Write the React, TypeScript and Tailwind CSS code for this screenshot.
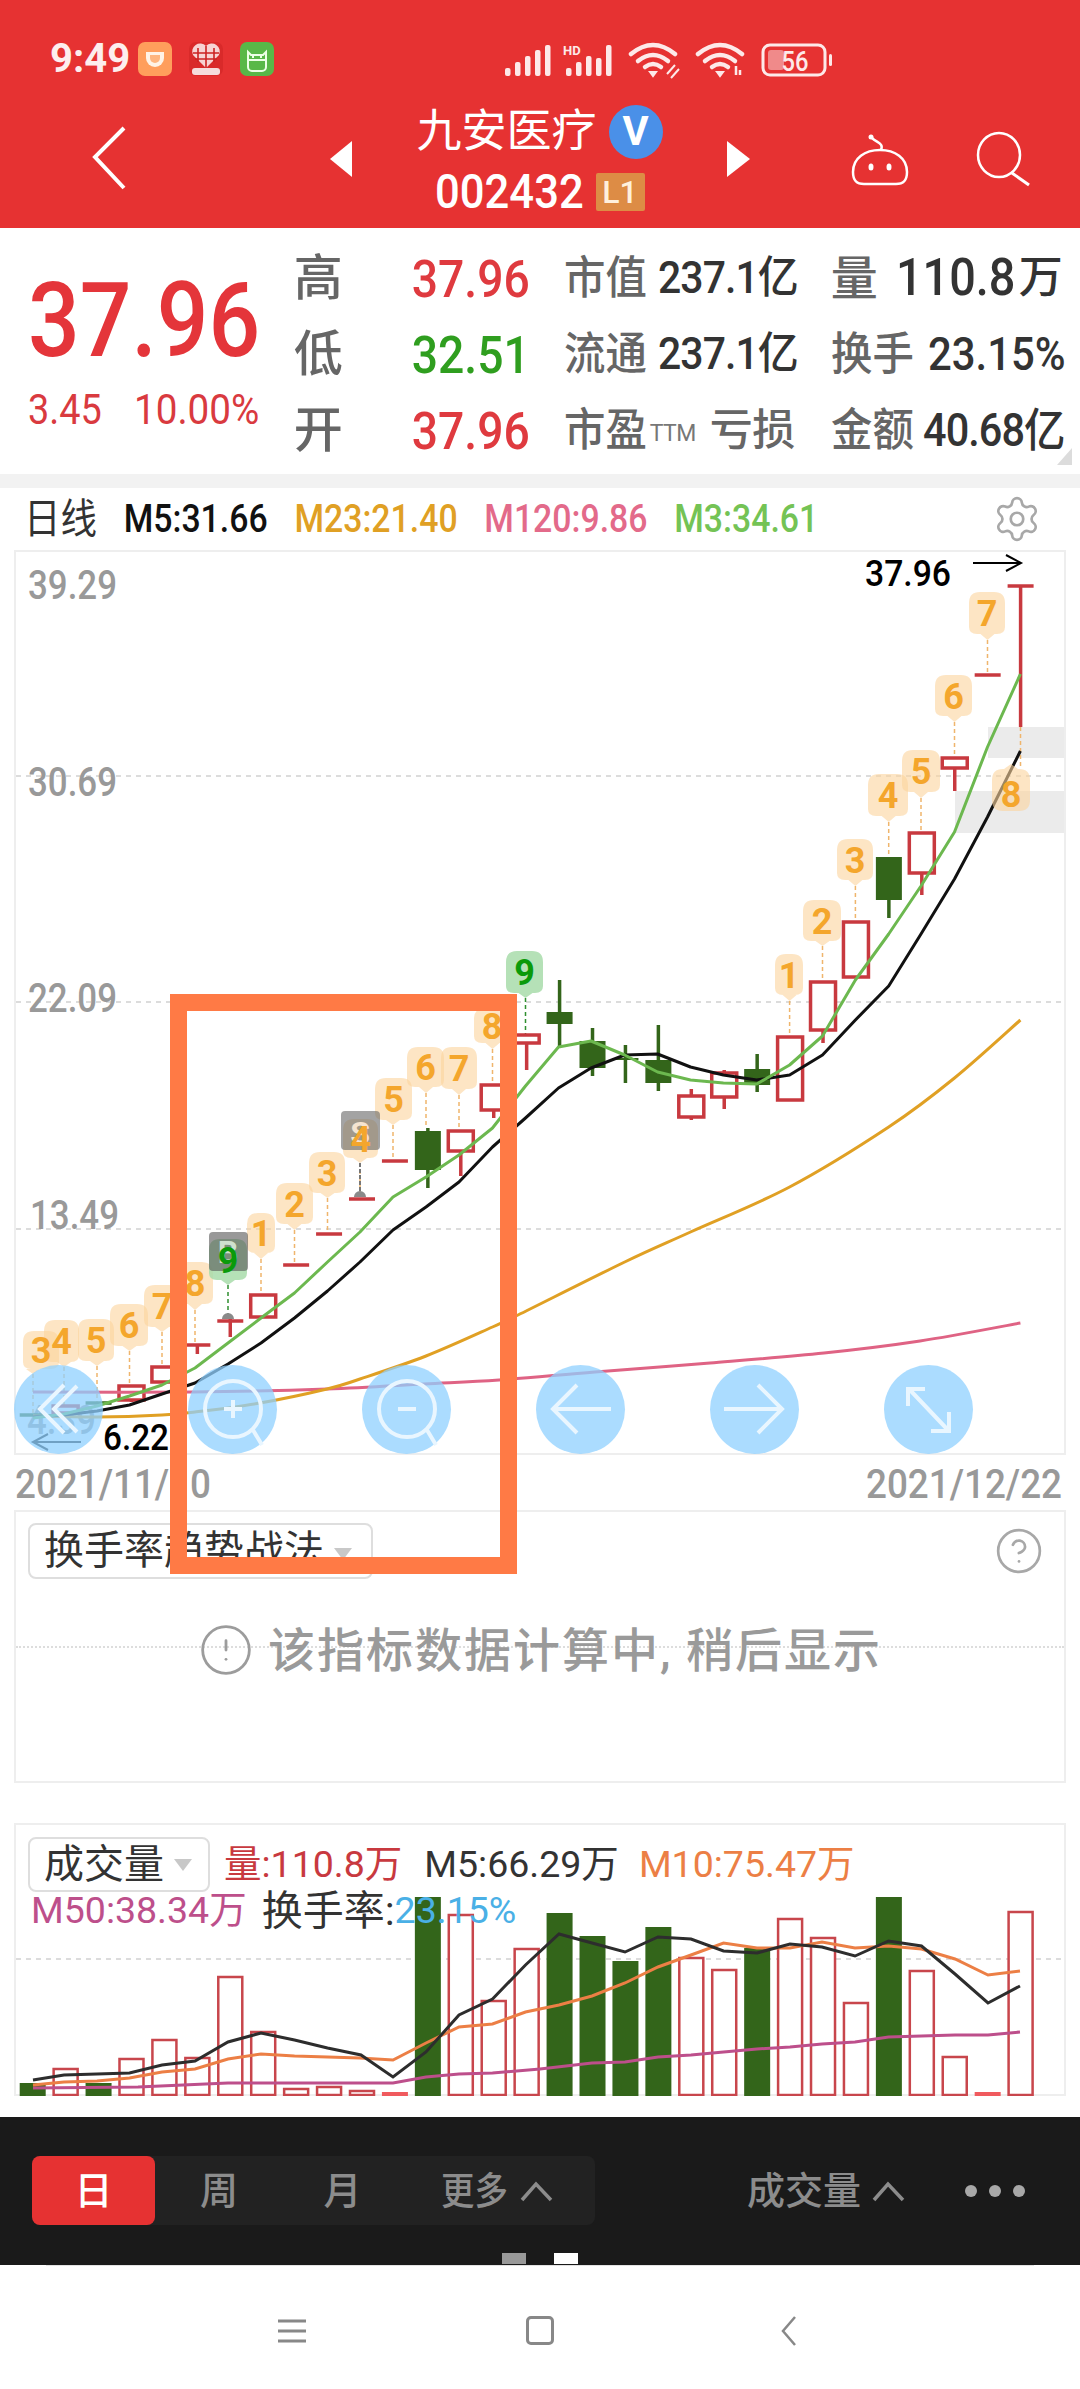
import React from "react";
import { Settings, CircleHelp, CircleAlert } from "lucide-react";

const X = (i: number) => 32.7 + 32.93 * i;
type C = [number, "h" | "g" | "d" | "e", number, number, number?, number?];
const RED = "#c8393f";
const GRN = "#33651a";
const candles: C[] = [
  [0, "e", 1415, 1415],
  [1, "h", 1406, 1413],
  [2, "e", 1403, 1403],
  [3, "h", 1386, 1400, 1386, 1402],
  [4, "h", 1367, 1382],
  [5, "d", 1345, 1345, 1345, 1354],
  [6, "d", 1321, 1321, 1316, 1337],
  [7, "h", 1295, 1317],
  [8, "d", 1265, 1265],
  [9, "d", 1234, 1234],
  [10, "d", 1199, 1199],
  [11, "d", 1161, 1161],
  [12, "g", 1131, 1170, 1128, 1188],
  [13, "h", 1131, 1151, 1131, 1176],
  [14, "h", 1085, 1110, 1085, 1118],
  [15, "h", 1035, 1043, 1035, 1070],
  [16, "g", 1012, 1024, 980, 1047],
  [17, "g", 1041, 1068, 1028, 1076],
  [18, "g", 1058, 1060, 1045, 1083],
  [19, "g", 1060, 1083, 1025, 1091],
  [20, "h", 1096, 1117, 1089, 1120],
  [21, "h", 1073, 1097, 1070, 1109],
  [22, "g", 1069, 1085, 1054, 1092],
  [23, "h", 1037, 1100],
  [24, "h", 982, 1030, 982, 1043],
  [25, "h", 922, 977],
  [26, "g", 857, 900, 857, 918],
  [27, "h", 833, 873, 833, 895],
  [28, "h", 758, 768, 758, 791],
  [29, "d", 675, 675],
  [30, "d", 586, 586, 586, 727],
];
type B = [string, number, number, number, number, number, number, number];
const badges: B[] = [
  ["3", 23, 59, 1331, 1369, 33, 1374, 1415],
  ["4", 44, 79, 1320, 1362, 64, 1367, 1406],
  ["5", 78, 114, 1319, 1361, 97, 1366, 1403],
  ["6", 110, 148, 1304, 1346, 129.5, 1351, 1386],
  ["7", 144, 180, 1285, 1327, 162, 1332, 1367],
  ["8", 177, 213, 1262, 1304, 195, 1310, 1345],
  ["9", 209, 247, 1239, 1280, 228, 1285, 1316],
  ["1", 247, 275, 1213, 1253, 261, 1259, 1295],
  ["2", 276, 313, 1183, 1224, 294.5, 1230, 1265],
  ["3", 309, 345, 1152, 1193, 327.5, 1198, 1234],
  ["4", 343, 378, 1119, 1158, 360, 1163, 1199],
  ["5", 375, 412, 1078, 1120, 393, 1125, 1161],
  ["6", 407, 444, 1047, 1087, 426, 1093, 1128],
  ["7", 441, 477, 1047, 1089, 459, 1095, 1131],
  ["8", 474, 510, 1008, 1043, 492.5, 1049, 1085],
  ["9", 506, 543, 951, 993, 525.5, 998, 1035],
  ["1", 775, 803, 954, 995, 789.6, 1001, 1037],
  ["2", 803, 841, 900, 941, 822.5, 946, 982],
  ["3", 837, 873, 839, 880, 855.4, 886, 922],
  ["4", 868, 908, 774, 816, 888.7, 822, 857],
  ["5", 902, 940, 750, 792, 921, 798, 833],
  ["6", 935, 972, 675, 716, 954.5, 722, 758],
  ["7", 969, 1005, 592, 634, 987.5, 640, 675],
];
const pill = (b: B) => {
  const [, x0, x1, y0, y1, tx, ty] = b;
  const r = 11;
  return `M${x0 + r} ${y0}H${x1 - r}Q${x1} ${y0} ${x1} ${y0 + r}V${y1 - 7}Q${x1} ${y1} ${x1 - 8} ${y1}H${tx + 7}L${tx} ${ty}L${tx - 7} ${y1}H${x0 + 8}Q${x0} ${y1} ${x0} ${y1 - 7}V${y0 + r}Q${x0} ${y0} ${x0 + r} ${y0}Z`;
};
const P = (a: number[][]) => a.map((p) => p.join(",")).join(" ");
const smooth = (a: number[][]) => {
  let d = `M${a[0][0]} ${a[0][1]}`;
  for (let i = 0; i < a.length - 1; i++) {
    const p0 = a[Math.max(i - 1, 0)];
    const p1 = a[i];
    const p2 = a[i + 1];
    const p3 = a[Math.min(i + 2, a.length - 1)];
    d += `C${p1[0] + (p2[0] - p0[0]) / 6} ${p1[1] + (p2[1] - p0[1]) / 6} ${p2[0] - (p3[0] - p1[0]) / 6} ${p2[1] - (p3[1] - p1[1]) / 6} ${p2[0]} ${p2[1]}`;
  }
  return d;
};
const ma3 = [[33, 1418], [64, 1414], [97, 1406], [129.5, 1396], [162, 1385], [195, 1368], [228, 1343], [261, 1318], [294.5, 1293], [327.5, 1262], [360, 1232], [393, 1197], [426, 1177], [459, 1155], [492.5, 1128], [525.5, 1086], [558.5, 1047], [591, 1041], [624.7, 1055], [657.6, 1072], [690.5, 1080], [723.4, 1083], [756.7, 1084], [789.6, 1065], [822.5, 1036], [855.4, 980], [888.7, 934], [921, 886], [954.5, 832], [987.5, 747], [1020.4, 674]];
const ma5 = [[33, 1417], [64, 1415], [97, 1411], [129.5, 1405], [162, 1394], [195, 1383], [228, 1364], [261, 1343], [294.5, 1318], [327.5, 1291], [360, 1262], [393, 1230], [426, 1207], [459, 1182], [492.5, 1147], [525.5, 1118], [558.5, 1088], [591, 1068], [624.7, 1055], [657.6, 1054], [690.5, 1067], [723.4, 1075], [756.7, 1080], [789.6, 1075], [822.5, 1055], [855.4, 1020], [888.7, 986], [921, 934], [954.5, 879], [987.5, 817], [1020.4, 751]];
const ma23 = [[33, 1416], [97, 1417], [162, 1415], [195, 1412], [260, 1403], [327, 1389], [360, 1379], [426, 1356], [492.5, 1327], [518, 1315], [624.7, 1262], [690.5, 1232], [789.6, 1187], [888.7, 1127], [954.5, 1078], [1020.4, 1020]];
const ma120 = [[33, 1392], [193, 1392], [327, 1389], [424, 1384], [499, 1380], [595, 1372], [710, 1363], [824, 1353], [920, 1341], [1020.4, 1323]];

type V = [number, number];
const vols: V[] = [[2083, 0], [2069, 1], [2083, 0], [2059, 1], [2040, 1], [2058, 1], [1977, 1], [2032, 1], [2089, 1], [2087, 1], [2091, 1], [2092, 2], [1897, 0], [1915, 1], [2001, 1], [1949, 1], [1913, 0], [1936, 0], [1961, 0], [1927, 0], [1958, 1], [1970, 1], [1948, 0], [1919, 1], [1938, 1], [2003, 1], [1897, 0], [1971, 1], [2057, 1], [2092, 2], [1912, 1]];
const vBlack = [[33, 2080], [64, 2075], [97, 2074], [129.5, 2073], [162, 2065], [195, 2061], [228, 2042], [261, 2033], [294.5, 2040], [327.5, 2048], [361, 2055], [393, 2077], [426, 2052], [459, 2015], [492.5, 1999], [525.5, 1965], [559, 1934], [592, 1943], [625, 1952], [658, 1937], [691, 1939], [723.5, 1951], [757, 1953], [790, 1944], [822, 1947], [855, 1956], [888.5, 1941], [921.5, 1946], [955, 1974], [988, 2003], [1020, 1986]];
const vOrange = [[33, 2085], [64, 2082], [97, 2081], [129.5, 2078], [162, 2072], [195, 2069], [228, 2059], [261, 2054], [294.5, 2056], [327.5, 2057], [360, 2058], [393, 2060], [426, 2043], [459, 2027], [492.5, 2024], [525.5, 2012], [559, 2005], [592, 1996], [625, 1983], [658, 1967], [691, 1955], [723.5, 1943], [757, 1948], [790, 1948], [822, 1942], [855, 1948], [888.5, 1946], [921.5, 1949], [955, 1959], [988, 1975], [1020, 1971]];
const vPink = [[33, 2088], [138, 2087], [228, 2083], [393, 2083], [426, 2077], [459, 2074], [492.5, 2073], [540, 2069], [592, 2063], [625, 2062], [658, 2057], [691, 2055], [723.5, 2052], [757, 2049], [790, 2047], [822, 2044], [855, 2042], [888.5, 2037], [921.5, 2036], [955, 2035], [988, 2035], [1020, 2032]];

function StatusCluster() {
  const c = "#fde9e9";
  const bars = (x: number, hs: number[]) =>
    hs.map((h, i) => <rect key={i} x={x + i * 10} y={76 - h} width={5.5} height={h} rx={2} fill={c} />);
  const wifi = (cx: number) => (
    <g fill="none" stroke={c} strokeWidth={4.5} strokeLinecap="round">
      <path d={`M${cx - 22} 54Q${cx} 36 ${cx + 22} 54`} />
      <path d={`M${cx - 15} 61Q${cx} 49 ${cx + 15} 61`} />
      <path d={`M${cx - 8} 67Q${cx} 61 ${cx + 8} 67`} />
      <path d={`M${cx - 3} 72L${cx} 76L${cx + 3} 72Z`} fill={c} strokeWidth={2} />
    </g>
  );
  return (
    <svg width={332} height={40} viewBox="503 41 332 40" className="block">
      {bars(505, [8, 14, 20, 26, 31])}
      {bars(566, [8, 14, 20, 18, 31])}
      <text x={563} y={55} fontSize={13} fontWeight={700} fill={c}>HD</text>
      {wifi(653)}
      <g fill="none" stroke={c} strokeWidth={2}>
        <path d="M667 74l8-9M671 78l8-9" />
      </g>
      {wifi(720)}
      <path d="M736 66v9M740 70v5" stroke={c} strokeWidth={2.5} />
      <rect x={763} y={45} width={62} height={30} rx={7} fill="none" stroke={c} strokeWidth={3} />
      <rect x={768} y={50} width={16} height={20} rx={3} fill="#f08a8a" />
      <rect x={829} y={54} width={3} height={12} rx={1.5} fill={c} />
      <text x={795} y={71} textAnchor="middle" fontSize={27} fontWeight={500} fill={c} textLength={27} lengthAdjust="spacingAndGlyphs">56</text>
    </svg>
  );
}

function AppIcons() {
  return (
    <svg width={136} height={36} viewBox="138 41 136 36" className="block">
      <rect x={138} y={42} width={34} height={34} rx={7} fill="#ff9e5c" />
      <path d="M146 52h18v6a9 9 0 0 1-18 0z" fill="#fff3e6" />
      <path d="M150 55h10v3a5 5 0 0 1-10 0z" fill="#ffb57e" />
      <rect x={189} y={42} width={34} height={34} rx={7} fill="#d92a2a" />
      <path d="M206 68l-13-13a8 8 0 0 1 13-9 8 8 0 0 1 13 9z" fill="#f7d3d3" />
      <path d="M198 48v14M206 46v22M214 48v14M193 53h26M195 59h22" stroke="#c22" strokeWidth={1.6} />
      <rect x={192} y={68} width={28} height={7} rx={3} fill="#f5dcdc" />
      <rect x={240} y={42} width={34} height={34} rx={7} fill="#59b848" />
      <path d="M248 52l3 3h12l3-3v15a4 4 0 0 1-4 4h-10a4 4 0 0 1-4-4z" fill="none" stroke="#ecffe6" strokeWidth={2} />
      <path d="M248 60h18M253 56v2M261 56v2" stroke="#ecffe6" strokeWidth={2} />
    </svg>
  );
}

function CandleChart() {
  return (
    <svg width={1048} height={901} viewBox="16 552 1048 901" className="block">
      {[776, 1002, 1229].map((y) => (
        <line key={y} x1={16} x2={1064} y1={y} y2={y} stroke="#dcdcdc" strokeWidth={2} strokeDasharray="5 5" />
      ))}
      <rect x={988} y={727} width={76} height={31} fill="#ebebeb" />
      <rect x={955} y={791} width={109} height={42} fill="#ebebeb" />
      {[["39.29", 28, 599], ["30.69", 28, 796], ["22.09", 28, 1012], ["13.49", 30, 1229]].map(([t, x, y]) => (
        <text key={t as string} x={x as number} y={y as number} fontSize={40} fontWeight={500} fill="#999" textLength={89} lengthAdjust="spacingAndGlyphs">{t}</text>
      ))}
      <text x={27} y={1434} fontSize={40} fontWeight={500} fill="#999" textLength={69} lengthAdjust="spacingAndGlyphs">4.39</text>
      {badges.map((b, i) => (
        <line key={i} x1={b[5]} x2={b[5]} y1={b[6]} y2={b[7]} stroke={b[0] === "9" ? "#2f8f2f" : "#efb56c"} strokeWidth={1.5} strokeDasharray="4 3" />
      ))}
      <line x1={1020.5} x2={1020.5} y1={727} y2={766} stroke="#efb56c" strokeWidth={1.5} strokeDasharray="4 3" />
      <line x1={360} x2={360} y1={1163} y2={1197} stroke="#777" strokeWidth={2} strokeDasharray="4 2" />
      {candles.map(([i, t, bt, bb, wt, wb]) => {
        const cx = X(i);
        const col = t === "g" || t === "e" ? GRN : RED;
        return (
          <g key={i}>
            {wt !== undefined && <line x1={cx} x2={cx} y1={wt} y2={wb} stroke={col} strokeWidth={3.5} />}
            {t === "h" && <rect x={cx - 12.5} y={bt} width={25} height={bb - bt} fill="#fff" stroke={col} strokeWidth={3.5} />}
            {t === "g" && <rect x={cx - 13} y={bt} width={26} height={bb - bt} fill={col} />}
            {(t === "d" || t === "e") && <line x1={cx - 13} x2={cx + 13} y1={bt} y2={bt} stroke={col} strokeWidth={3.5} />}
          </g>
        );
      })}
      <path d="M222 1319a6 6 0 0 1 12 0zM354 1197a6 6 0 0 1 12 0z" fill="#8a8a8a" />
      <path d={smooth(ma120)} fill="none" stroke="#df6384" strokeWidth={3} />
      <path d={smooth(ma23)} fill="none" stroke="#e0a024" strokeWidth={3} />
      <polyline points={P(ma5)} fill="none" stroke="#111" strokeWidth={3} strokeLinejoin="round" />
      <polyline points={P(ma3)} fill="none" stroke="#6cb84f" strokeWidth={3} strokeLinejoin="round" />
      {badges.map((b, i) => (
        <path key={i} d={pill(b)} fill={b[0] === "9" ? "#a8dcaa" : "#fbd49c"} opacity={b[0] === "9" ? 0.85 : 0.6} />
      ))}
      <path d="M992 780Q992 769 1003 769H1004L1011 764L1018 769H1019Q1030 769 1030 780V800Q1030 811 1019 811H1003Q992 811 992 800Z" fill="#fbd49c" opacity={0.6} />
      <rect x={209} y={1232} width={39} height={39} rx={4} fill="#555" opacity={0.6} />
      <rect x={341} y={1111} width={39} height={39} rx={4} fill="#666" opacity={0.6} />
      <text x={228} y={1263} textAnchor="middle" fontSize={32} fontWeight={700} fill="#cfe0cf">B</text>
      <text x={360} y={1144} textAnchor="middle" fontSize={32} fontWeight={700} fill="#f5e4d0">S</text>
      {badges.map((b, i) => (
        <text key={i} x={(b[1] + b[2]) / 2} y={(b[3] + b[4]) / 2 + 13} textAnchor="middle" fontSize={36} fontWeight={700} fill={b[0] === "9" ? "#0a9a0a" : "#f4a62c"}>{b[0]}</text>
      ))}
      <text x={1011} y={807} textAnchor="middle" fontSize={36} fontWeight={700} fill="#f4a62c">8</text>
      <text x={865} y={586} fontSize={36} fontWeight={500} fill="#000" textLength={86} lengthAdjust="spacingAndGlyphs">37.96</text>
      <path d="M973 563H1020M1006 555L1021 563L1006 571" fill="none" stroke="#000" strokeWidth={2} />
      <text x={103} y={1450} fontSize={36} fontWeight={500} fill="#000" textLength={66} lengthAdjust="spacingAndGlyphs">6.22</text>
      <path d="M81 1442H34M48 1434L33 1442L48 1450" fill="none" stroke="#111" strokeWidth={2} />
    </svg>
  );
}

function VolumeChart() {
  return (
    <svg width={1052} height={273} viewBox="14 1823 1052 273" className="block">
      <line x1={16} x2={1064} y1={1959} y2={1959} stroke="#dcdcdc" strokeWidth={2} strokeDasharray="5 5" />
      {vols.map(([top, k], i) => {
        const cx = X(i);
        if (k === 0) return <rect key={i} x={cx - 13} y={top} width={26} height={2096 - top} fill={GRN} />;
        if (k === 2) return <rect key={i} x={cx - 13} y={top} width={26} height={2096 - top} fill="#f05a5e" />;
        return <rect key={i} x={cx - 12} y={top} width={24} height={2095 - top} fill="#fff" stroke="#c8464c" strokeWidth={2.5} />;
      })}
      <polyline points={P(vPink)} fill="none" stroke="#bd4f8b" strokeWidth={3} />
      <polyline points={P(vOrange)} fill="none" stroke="#ec7f45" strokeWidth={3} />
      <polyline points={P(vBlack)} fill="none" stroke="#2d2d2d" strokeWidth={3} />
    </svg>
  );
}

const ci = "block";
const stroke = { fill: "none", stroke: "#e9f6ff", strokeWidth: 4 } as const;
function Buttons() {
  return (
    <div className="absolute -left-[2px] top-[813px] flex gap-[85px]">
      <div className="w-[89px] h-[89px] rounded-full bg-[#8fd0ff]/75">
        <svg width={89} height={89} className={ci}><path d="M50 20L26 44L50 68M63 21L40 44L63 67" {...stroke} /></svg>
      </div>
      <div className="w-[89px] h-[89px] rounded-full bg-[#8fd0ff]/75">
        <svg width={89} height={89} className={ci}><circle cx={45} cy={44} r={28} {...stroke} /><path d="M65 65L74 80M45 35V53M36 44H54" {...stroke} /></svg>
      </div>
      <div className="w-[89px] h-[89px] rounded-full bg-[#8fd0ff]/75">
        <svg width={89} height={89} className={ci}><circle cx={45} cy={44} r={28} {...stroke} /><path d="M65 65L74 80M36 44H54" {...stroke} /></svg>
      </div>
      <div className="w-[89px] h-[89px] rounded-full bg-[#8fd0ff]/75">
        <svg width={89} height={89} className={ci}><path d="M75 44H18M41 20L17 44L41 68" {...stroke} /></svg>
      </div>
      <div className="w-[89px] h-[89px] rounded-full bg-[#8fd0ff]/75">
        <svg width={89} height={89} className={ci}><path d="M14 44H71M48 20L72 44L48 68" {...stroke} /></svg>
      </div>
      <div className="w-[89px] h-[89px] rounded-full bg-[#8fd0ff]/75">
        <svg width={89} height={89} className={ci}><path d="M26 25L63 64M41 24H24V41M47 66H65V47" {...stroke} /></svg>
      </div>
    </div>
  );
}

function Caret() {
  return (
    <svg width={33} height={22} viewBox="0 0 33 22" className="block">
      <path d="M2 20L16 4L31 20" fill="none" stroke="#8c8c8c" strokeWidth={3.5} />
    </svg>
  );
}

export default function App() {
  return (
    <div className="relative w-[1080px] h-[2389px] overflow-hidden bg-white flex flex-col font-['Roboto','Noto_Sans_CJK_SC',sans-serif]">
      {/* header */}
      <div className="h-[228px] shrink-0 bg-[#e63232] flex flex-col text-white">
        <div className="h-[100px] pt-[41px] pl-[50px] flex items-start">
          <span className="block w-[88px] text-[40px] leading-[36px] font-bold text-[#fdeeee]">9:49</span>
          <AppIcons />
          <div className="ml-[229px]"><StatusCluster /></div>
        </div>
        <div className="flex items-start pl-[92px]">
          <svg width={34} height={64} viewBox="0 0 34 64" className="block mt-[26px]">
            <path d="M32 2L3 31L32 62" fill="none" stroke="#fff" strokeWidth={4} />
          </svg>
          <svg width={22} height={36} viewBox="0 0 22 36" className="block ml-[204px] mt-[41px]">
            <path d="M22 0V36L0 18Z" fill="#fff" />
          </svg>
          <div className="w-[375px] flex flex-col items-center">
            <div className="h-[60px] flex items-center mt-[2px]">
              <span className="text-[45px] leading-[60px] tracking-[0px]">九安医疗</span>
              <span className="ml-[12px] w-[54px] h-[54px] rounded-full bg-[#4a90e8] flex items-center justify-center text-[40px] leading-none font-bold">V</span>
            </div>
            <div className="h-[40px] mt-[10px] flex items-center">
              <span className="block w-[147px] origin-left scale-x-[0.89] whitespace-nowrap text-[49px] leading-[40px] font-medium">002432</span>
              <span className="ml-[14px] w-[49px] h-[38px] bg-[#dd8c45] rounded-[2px] flex items-center justify-center text-[32px] leading-none font-medium text-[#fff0dc]">L1</span>
            </div>
          </div>
          <svg width={23} height={36} viewBox="0 0 23 36" className="block mt-[41px]">
            <path d="M0 0V36L23 18Z" fill="#fff" />
          </svg>
          <svg width={62} height={54} viewBox="849 133 62 54" className="block ml-[99px] mt-[33px]">
            <path d="M853 172C853 158 865 150 880 150C895 150 907 158 907 172C907 181 903 184 896 184H864C857 184 853 181 853 172Z" fill="none" stroke="#fff" strokeWidth={2.5} />
            <path d="M881 150C884 143 877 143 872 138" fill="none" stroke="#fff" strokeWidth={2.5} />
            <circle cx={871} cy={137} r={2.5} fill="#fff" />
            <ellipse cx={871} cy={167} rx={2.5} ry={3.5} fill="#fff" />
            <ellipse cx={889} cy={167} rx={2.5} ry={3.5} fill="#fff" />
          </svg>
          <svg width={56} height={56} viewBox="975 131 56 56" className="block ml-[65px] mt-[31px]">
            <ellipse cx={998} cy={155} rx={21} ry={22} fill="none" stroke="#fff" strokeWidth={2.5} />
            <path d="M1011 173L1028 185" fill="none" stroke="#fff" strokeWidth={3} />
          </svg>
        </div>
      </div>

      {/* quote */}
      <div className="relative h-[246px] shrink-0 flex">
        <div className="w-[298px] pl-[28px] pt-[38px]">
          <span className="block w-[230px] origin-left scale-x-[0.875] whitespace-nowrap text-[104px] leading-[110px] font-medium text-[#e4353a]">37.96</span>
          <div className="flex text-[42px] leading-[50px] text-[#d93a3f] mt-[9px] -ml-[0px]">
            <span className="block w-[106px] origin-left scale-x-[0.9]">3.45</span>
            <span className="block w-[127px] origin-left scale-x-[0.92] whitespace-nowrap">10.00%</span>
          </div>
        </div>
        <div className="pt-[12px] flex flex-col">
          {[
            ["高", "37.96", "text-[#df3a3f]", "市值", "237.1亿", "量", "110.8", "万"],
            ["低", "32.51", "text-[#2f9e1f]", "流通", "237.1亿", "换手", "23.15%", ""],
            ["开", "37.96", "text-[#df3a3f]", "市盈", "亏损", "金额", "40.68亿", ""],
          ].map((r, i) => (
            <div key={i} className="h-[76px] flex items-center text-[#666]">
              <span className="block w-[115px] text-[49px] leading-none font-medium">{r[0]}</span>
              <span className={`block w-[155px] pl-[3px] pt-[3px] origin-left scale-x-[0.89] whitespace-nowrap text-[52px] leading-none font-medium ${r[2]}`}>{r[1]}</span>
              <div className="w-[267px] flex items-center">
                <span className="block w-[94px] origin-left scale-x-[0.92] whitespace-nowrap text-[45px] leading-none font-medium">{r[3]}</span>
                {i === 2 ? (
                  <>
                    <span className="block -ml-[8px] w-[60px] text-[23px] leading-none self-start text-[#777] mt-[14px] tracking-[-0.5px]">TTM</span>
                    <span className="block text-[43px] leading-none tracking-[-0.5px] font-medium">{r[4]}</span>
                  </>
                ) : (
                  <span className="block origin-left scale-x-[0.93] whitespace-nowrap text-[44px] leading-none font-medium text-[#333] tracking-[-1px]">{r[4]}</span>
                )}
              </div>
              {i === 0 ? (
                <div className="flex items-center">
                  <span className="block w-[65px] text-[47px] leading-none font-medium">{r[5]}</span>
                  <span className="block w-[123px] origin-left scale-x-[0.9] whitespace-nowrap text-[52px] leading-none font-medium text-[#333]">{r[6]}</span>
                  <span className="block text-[44px] leading-none font-medium text-[#333]">{r[7]}</span>
                </div>
              ) : (
                <div className="flex items-center">
                  <span className={`block origin-left scale-x-[0.92] whitespace-nowrap text-[45px] leading-none font-medium ${i === 1 ? "w-[97px]" : "w-[92px]"}`}>{r[5]}</span>
                  <span className={`block origin-left whitespace-nowrap text-[46px] leading-none font-medium text-[#333] ${i === 1 ? "scale-x-[0.91]" : "scale-x-[0.9] tracking-[-1px]"}`}>{r[6]}</span>
                </div>
              )}
            </div>
          ))}
        </div>
        <svg width={15} height={17} viewBox="0 0 15 17" className="absolute left-[1057px] top-[220px]">
          <path d="M15 0V17H0Z" fill="#dcdcdc" />
        </svg>
      </div>
      <div className="h-[14px] shrink-0 bg-[#f2f2f2]" />

      {/* legend */}
      <div className="h-[62px] shrink-0 flex items-center pl-[24px] pr-[38px]">
        <div className="flex items-center gap-[30px] origin-left scale-x-[0.89] text-[38px] leading-none font-medium whitespace-nowrap w-[900px]">
          <span className="text-[#333] text-[41px] font-normal">日线</span>
          <span className="text-[#111]">M5:31.66</span>
          <span className="text-[#e0a024]">M23:21.40</span>
          <span className="text-[#e36a8a]">M120:9.86</span>
          <span className="text-[#74c355]">M3:34.61</span>
        </div>
        <Settings size={50} strokeWidth={1.3} color="#a8a8a8" className="ml-auto shrink-0" />
      </div>

      {/* main chart */}
      <div className="relative mx-[14px] h-[905px] shrink-0 border-2 border-[#eeeeee]">
        <CandleChart />
        <Buttons />
      </div>

      {/* dates */}
      <div className="h-[55px] pt-[5px] shrink-0 flex items-center justify-between px-[15px] text-[40px] leading-none font-medium text-[#999]">
        <span className="block w-[198px] origin-left scale-x-[0.92] whitespace-nowrap">2021/11/10</span>
        <span className="block w-[199px] origin-left scale-x-[0.92] whitespace-nowrap">2021/12/22</span>
      </div>

      {/* indicator panel */}
      <div className="relative mx-[14px] h-[273px] shrink-0 border-2 border-[#eeeeee] flex flex-col">
        <div className="flex items-start pt-[11px] pl-[12px] pr-[20px]">
          <div className="w-[345px] h-[56px] border-2 border-[#dedede] rounded-[8px] flex items-center pl-[14px] text-[40px] leading-none text-[#333] whitespace-nowrap">
            换手率趋势战法
            <svg width={18} height={12} viewBox="0 0 18 12" className="block ml-[10px] mt-[6px]"><path d="M0 0H18L9 12Z" fill="#c8c8c8" /></svg>
          </div>
          <CircleHelp size={50} strokeWidth={1.3} color="#a8a8a8" className="ml-auto mt-[3px]" />
        </div>
        <div className="relative mt-[46px] h-[50px] flex items-center justify-center">
          <div className="absolute left-0 right-0 top-[21px] border-t-2 border-dotted border-[#dddddd]" />
          <CircleAlert size={56} strokeWidth={1.2} color="#9c9c9c" className="relative" />
          <span className="relative ml-[14px] text-[47px] leading-none font-medium tracking-[2px] text-[#9a9a9a] whitespace-nowrap">该指标数据计算中, 稍后显示</span>
        </div>
      </div>

      <div className="h-[40px] shrink-0" />

      {/* volume panel */}
      <div className="relative mx-[14px] h-[273px] shrink-0 border-2 border-[#eeeeee]">
        <div className="absolute -left-[2px] -top-[2px]"><VolumeChart /></div>
        <div className="relative pt-[12px] pl-[12px] text-[37.5px] leading-none whitespace-nowrap">
          <div className="flex items-center">
            <div className="w-[182px] h-[55px] border-2 border-[#dedede] rounded-[8px] flex items-center pl-[14px] text-[40px] text-[#333] bg-white">
              成交量
              <svg width={18} height={12} viewBox="0 0 18 12" className="block ml-[10px]"><path d="M0 0H18L9 12Z" fill="#c8c8c8" /></svg>
            </div>
            <span className="ml-[14px] text-[#c8393f]">量:110.8万</span>
            <span className="ml-[22px] text-[#333]">M5:66.29万</span>
            <span className="ml-[20px] text-[#ec7f45]">M10:75.47万</span>
          </div>
          <div className="flex items-center h-[36px] mt-[1px] pl-[3px]">
            <span className="text-[#bd4f8b]">M50:38.34万</span>
            <span className="ml-[15px] text-[#333] text-[41px]">换手率:</span>
            <span className="text-[#4ab0e6]">23.15%</span>
          </div>
        </div>
      </div>

      <div className="h-[21px] shrink-0" />

      {/* tab bar */}
      <div className="h-[148px] shrink-0 bg-[#1a1a1a] flex flex-col">
        <div className="mt-[39px] h-[69px] flex items-center pl-[32px] text-[#8c8c8c] text-[38px] leading-none font-medium">
          <div className="w-[563px] h-[69px] rounded-[8px] bg-[#222222] flex items-center">
            <div className="w-[123px] h-[69px] rounded-[8px] bg-[#e63232] flex items-center justify-center text-white">日</div>
            <div className="w-[124px] pl-[4px] text-center">周</div>
            <div className="w-[124px] pl-[3px] text-center">月</div>
            <div className="flex items-center pl-[38px]">
              <span className="block w-[67px] origin-left scale-x-[0.88] whitespace-nowrap">更多</span>
              <span className="block ml-[12px]"><Caret /></span>
            </div>
          </div>
          <span className="ml-[152px]">成交量</span>
          <div className="ml-[11px]"><Caret /></div>
          <div className="ml-[60px] flex gap-[12px]">
            <span className="w-[12px] h-[12px] rounded-full bg-[#a8a8a8]" />
            <span className="w-[12px] h-[12px] rounded-full bg-[#a8a8a8]" />
            <span className="w-[12px] h-[12px] rounded-full bg-[#a8a8a8]" />
          </div>
        </div>
        <div className="mt-[28px] flex justify-center gap-[28px]">
          <span className="w-[24px] h-[11px] bg-[#999999]" />
          <span className="w-[24px] h-[11px] bg-white" />
        </div>
      </div>

      {/* nav */}
      <div className="flex-1 bg-white flex flex-col">
        <div className="mx-[46px] h-px bg-[#e2e2e2]" />
        <div className="flex-1 flex items-center justify-center pt-[6px]">
          <div className="w-[248px] flex justify-center">
            <svg width={28} height={24} viewBox="0 0 28 24" className="block"><path d="M0 2H28M0 12H28M0 22H28" stroke="#888" strokeWidth={3} /></svg>
          </div>
          <div className="w-[248px] flex justify-center">
            <div className="w-[28px] h-[29px] border-[3px] border-[#888] rounded-[5px]" />
          </div>
          <div className="w-[248px] flex justify-center">
            <svg width={15} height={30} viewBox="0 0 15 30" className="block"><path d="M14 1L2 15L14 29" fill="none" stroke="#888" strokeWidth={2.5} /></svg>
          </div>
        </div>
      </div>

      {/* annotation rectangle */}
      <div className="absolute left-[170px] top-[994px] w-[347px] h-[580px] border-[17px] border-[#ff7a45]" />
    </div>
  );
}
